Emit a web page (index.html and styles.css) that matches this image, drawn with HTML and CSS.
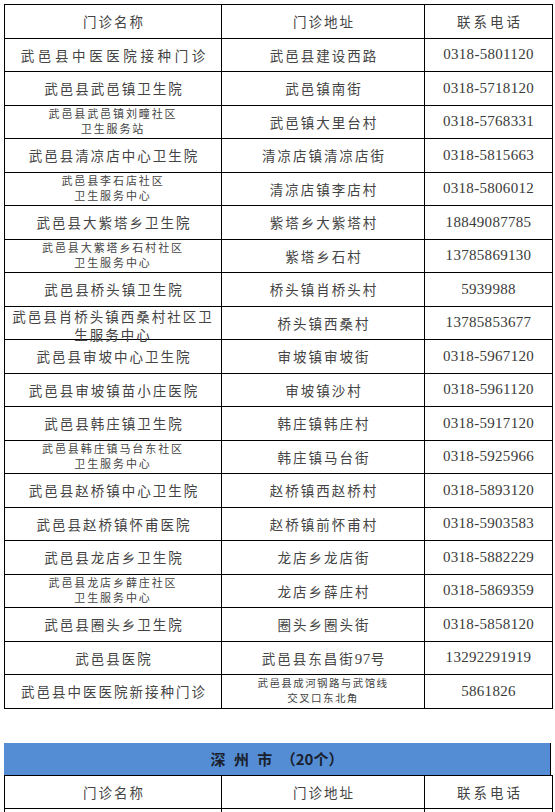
FILE: index.html
```html
<!DOCTYPE html>
<html lang="zh">
<head>
<meta charset="utf-8">
<title>门诊列表</title>
<link rel="stylesheet" href="styles.css">
</head>
<body>
<div class="page">
  <table class="tbl">
    <colgroup><col class="c1"><col class="c2"><col class="c3"></colgroup>
    <tr><td class="name">门诊名称</td><td class="addr">门诊地址</td><td class="head-ph">联系电话</td></tr>
    <tr><td class="name wide">武邑县中医医院接种门诊</td><td class="addr">武邑县建设西路</td><td class="ph">0318-5801120</td></tr>
    <tr><td class="name">武邑县武邑镇卫生院</td><td class="addr">武邑镇南街</td><td class="ph">0318-5718120</td></tr>
    <tr><td class="name small">武邑县武邑镇刘疃社区<br>卫生服务站</td><td class="addr">武邑镇大里台村</td><td class="ph">0318-5768331</td></tr>
    <tr><td class="name">武邑县清凉店中心卫生院</td><td class="addr">清凉店镇清凉店街</td><td class="ph">0318-5815663</td></tr>
    <tr><td class="name small">武邑县李石店社区<br>卫生服务中心</td><td class="addr">清凉店镇李店村</td><td class="ph">0318-5806012</td></tr>
    <tr><td class="name">武邑县大紫塔乡卫生院</td><td class="addr">紫塔乡大紫塔村</td><td class="ph">18849087785</td></tr>
    <tr><td class="name small">武邑县大紫塔乡石村社区<br>卫生服务中心</td><td class="addr">紫塔乡石村</td><td class="ph">13785869130</td></tr>
    <tr><td class="name">武邑县桥头镇卫生院</td><td class="addr">桥头镇肖桥头村</td><td class="ph">5939988</td></tr>
    <tr><td class="name"><div class="overflow">武邑县肖桥头镇西桑村社区卫<br>生服务中心</div></td><td class="addr">桥头镇西桑村</td><td class="ph">13785853677</td></tr>
    <tr><td class="name">武邑县审坡中心卫生院</td><td class="addr">审坡镇审坡街</td><td class="ph">0318-5967120</td></tr>
    <tr><td class="name">武邑县审坡镇苗小庄医院</td><td class="addr">审坡镇沙村</td><td class="ph">0318-5961120</td></tr>
    <tr><td class="name">武邑县韩庄镇卫生院</td><td class="addr">韩庄镇韩庄村</td><td class="ph">0318-5917120</td></tr>
    <tr><td class="name small">武邑县韩庄镇马台东社区<br>卫生服务中心</td><td class="addr">韩庄镇马台街</td><td class="ph">0318-5925966</td></tr>
    <tr><td class="name">武邑县赵桥镇中心卫生院</td><td class="addr">赵桥镇西赵桥村</td><td class="ph">0318-5893120</td></tr>
    <tr><td class="name">武邑县赵桥镇怀甫医院</td><td class="addr">赵桥镇前怀甫村</td><td class="ph">0318-5903583</td></tr>
    <tr><td class="name">武邑县龙店乡卫生院</td><td class="addr">龙店乡龙店街</td><td class="ph">0318-5882229</td></tr>
    <tr><td class="name small">武邑县龙店乡薛庄社区<br>卫生服务中心</td><td class="addr">龙店乡薛庄村</td><td class="ph">0318-5869359</td></tr>
    <tr><td class="name">武邑县圈头乡卫生院</td><td class="addr">圈头乡圈头街</td><td class="ph">0318-5858120</td></tr>
    <tr><td class="name">武邑县医院</td><td class="addr">武邑县东昌街<span class="num">97</span>号</td><td class="ph">13292291919</td></tr>
    <tr><td class="name">武邑县中医医院新接种门诊</td><td class="addr small-addr">武邑县成河钢路与武馆线<br>交叉口东北角</td><td class="ph">5861826</td></tr>
  </table>

  <div class="region">深 州 市 （20个）</div>
  <table class="tbl tbl2">
    <colgroup><col class="c1"><col class="c2"><col class="c3"></colgroup>
    <tr><td class="name">门诊名称</td><td class="addr">门诊地址</td><td class="head-ph">联系电话</td></tr>
    <tr><td></td><td></td><td></td></tr>
  </table>
</div>
</body>
</html>
```

FILE: styles.css
```css
html, body {
  margin: 0;
  padding: 0;
  background: #ffffff;
}

.page {
  padding: 4px 0 0 4px;
  width: 548px;
}

.tbl {
  border-collapse: collapse;
  table-layout: fixed;
  width: 548px;
  color: #444444;
  font-family: "Liberation Serif", "Noto Sans CJK SC", serif;
}

.c1 { width: 217px; }
.c2 { width: 203px; }
.c3 { width: 128px; }

.tbl tr {
  height: 33.5px;
}

.tbl td {
  border: 1px solid #000;
  padding: 0;
  text-align: center;
  vertical-align: middle;
  white-space: nowrap;
  overflow: visible;
}

.name {
  font-size: 13.5px;
  letter-spacing: 2px;
  text-indent: 2px;
}

.name.wide {
  letter-spacing: 3.6px;
  text-indent: 3.6px;
}

.name.small {
  font-size: 11px;
  letter-spacing: 1.9px;
  line-height: 15px;
  text-indent: 0;
}

.overflow {
  height: 28px;
  line-height: 18px;
  letter-spacing: 2px;
  text-indent: 0;
}

.addr {
  font-size: 13.5px;
  letter-spacing: 2px;
  text-indent: 2px;
}

.num {
  font-size: 15px;
  letter-spacing: 0.5px;
}

.small-addr {
  font-size: 10.5px;
  letter-spacing: 1.4px;
  line-height: 15px;
  text-indent: 0;
}

.head-ph {
  font-size: 13.5px;
  letter-spacing: 3px;
  text-indent: 3px;
}

.ph {
  font-family: "Liberation Serif", serif;
  font-size: 15px;
  letter-spacing: 0.3px;
  color: #3a3a3a;
}

.region {
  margin-top: 34px;
  width: 547px;
  height: 33px;
  background: #548dd4;
  border-right: 1px solid #000;
  border-bottom: 1px solid #000;
  box-sizing: border-box;
  display: flex;
  align-items: center;
  justify-content: center;
  font-family: "Noto Sans CJK SC", sans-serif;
  font-weight: 700;
  font-size: 15px;
  word-spacing: 5px;
  color: #1a1f2e;
}

.tbl2 {
  margin-top: -1px;
}
```
